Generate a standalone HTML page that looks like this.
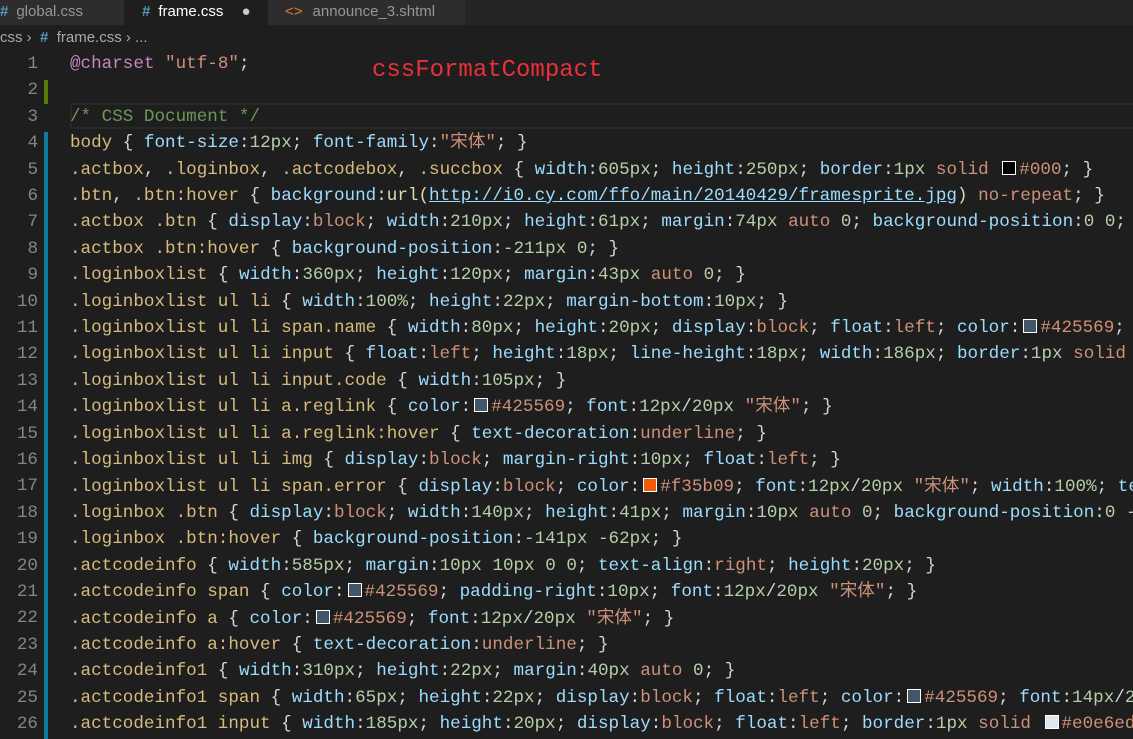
<!DOCTYPE html>
<html><head><meta charset="utf-8"><style>
*{margin:0;padding:0;box-sizing:border-box}
body{width:1133px;height:739px;overflow:hidden;background:#1e1e1e;font-family:"Liberation Sans",sans-serif;position:relative}
.tabs{position:absolute;left:0;top:0;width:1133px;height:25px;background:#252526}
.tab{position:absolute;top:0;height:25px;background:#2d2d2d;color:#969696;font-size:15px;line-height:24px;white-space:nowrap}
.tab .h{color:#519aba;font-weight:bold;margin-right:8px}
.crumb{position:absolute;top:25px;left:0;height:26px;line-height:26px;color:#a9a9a9;font-size:15px;white-space:nowrap}
.ed{position:absolute;left:0;top:51px;width:1133px}
.ln{position:absolute;left:0;width:38px;text-align:right;color:#858585;font-family:"Liberation Mono",monospace;font-size:17.6px;height:26.4px;line-height:26.4px}
.code{position:absolute;left:70px;white-space:pre;font-family:"Liberation Mono","Noto Sans CJK SC",monospace;font-size:17.6px;line-height:26.4px;color:#d4d4d4}
.s{color:#d7ba7d}.p{color:#9cdcfe}.v{color:#ce9178}.n{color:#b5cea8}.a{color:#c586c0}.cm{color:#6a9955}.f{color:#dcdcaa}.u{color:#9cdcfe;text-decoration:underline}
.sw{display:inline-block;width:14px;height:14px;border:1px solid #fff;margin:0 3px 0 3px;vertical-align:-1px}
</style></head><body>
<div class="tabs">
<div class="tab" style="left:0;width:124px;padding-left:0"><span class="h">#</span>global.css</div>
<div class="tab" style="left:124px;width:144px;background:#1e1e1e;color:#fff;padding-left:18px"><span class="h">#</span>frame.css <span style="color:#ccc;margin-left:14px">●</span></div>
<div class="tab" style="left:268px;width:197px;padding-left:17px"><span style="color:#e37933;margin-right:10px">&lt;&gt;</span>announce_3.shtml</div>
</div>
<div class="crumb">css <span style="color:#a9a9a9">›</span>&nbsp; <span style="color:#519aba;font-weight:bold">#</span>&nbsp; frame.css › ...</div>
<div style="position:absolute;left:372px;top:57px;font-family:'Liberation Mono',monospace;font-size:24px;color:#e8313a">cssFormatCompact</div>
<div style="position:absolute;left:70px;top:103px;width:1063px;height:26px;border:2px solid #282828;border-right:none"></div>
<div style="position:absolute;left:44px;top:80px;width:4px;height:24px;background:#587c0c"></div>
<div style="position:absolute;left:44px;top:132px;width:4px;height:607px;background:#0c7d9d"></div>
<div class="ed">
<div class="ln" style="top:0">1</div><div class="ln" style="top:26.4px">2</div><div class="ln" style="top:52.8px">3</div><div class="ln" style="top:79.2px">4</div><div class="ln" style="top:105.6px">5</div><div class="ln" style="top:132px">6</div><div class="ln" style="top:158.4px">7</div><div class="ln" style="top:184.8px">8</div><div class="ln" style="top:211.2px">9</div><div class="ln" style="top:237.6px">10</div><div class="ln" style="top:264px">11</div><div class="ln" style="top:290.4px">12</div><div class="ln" style="top:316.8px">13</div><div class="ln" style="top:343.2px">14</div><div class="ln" style="top:369.6px">15</div><div class="ln" style="top:396px">16</div><div class="ln" style="top:422.4px">17</div><div class="ln" style="top:448.8px">18</div><div class="ln" style="top:475.2px">19</div><div class="ln" style="top:501.6px">20</div><div class="ln" style="top:528px">21</div><div class="ln" style="top:554.4px">22</div><div class="ln" style="top:580.8px">23</div><div class="ln" style="top:607.2px">24</div><div class="ln" style="top:633.6px">25</div><div class="ln" style="top:660px">26</div>
<div class="code"><span class="a">@charset</span> <span class="v">"utf-8"</span>;

<span class="cm">/* CSS Document */</span>
<span class="s">body</span> { <span class="p">font-size</span>:<span class="n">12px</span>; <span class="p">font-family</span>:<span class="v">"宋体"</span>; }
<span class="s">.actbox</span>, <span class="s">.loginbox</span>, <span class="s">.actcodebox</span>, <span class="s">.succbox</span> { <span class="p">width</span>:<span class="n">605px</span>; <span class="p">height</span>:<span class="n">250px</span>; <span class="p">border</span>:<span class="n">1px</span> <span class="v">solid</span> <span class="sw" style="background:#000"></span><span class="v">#000</span>; }
<span class="s">.btn</span>, <span class="s">.btn:hover</span> { <span class="p">background</span>:<span class="f">url(</span><span class="u">http://i0.cy.com/ffo/main/20140429/framesprite.jpg</span><span class="f">)</span> <span class="v">no-repeat</span>; }
<span class="s">.actbox .btn</span> { <span class="p">display</span>:<span class="v">block</span>; <span class="p">width</span>:<span class="n">210px</span>; <span class="p">height</span>:<span class="n">61px</span>; <span class="p">margin</span>:<span class="n">74px</span> <span class="v">auto</span> <span class="n">0</span>; <span class="p">background-position</span>:<span class="n">0</span> <span class="n">0</span>; }
<span class="s">.actbox .btn:hover</span> { <span class="p">background-position</span>:<span class="n">-211px</span> <span class="n">0</span>; }
<span class="s">.loginboxlist</span> { <span class="p">width</span>:<span class="n">360px</span>; <span class="p">height</span>:<span class="n">120px</span>; <span class="p">margin</span>:<span class="n">43px</span> <span class="v">auto</span> <span class="n">0</span>; }
<span class="s">.loginboxlist ul li</span> { <span class="p">width</span>:<span class="n">100%</span>; <span class="p">height</span>:<span class="n">22px</span>; <span class="p">margin-bottom</span>:<span class="n">10px</span>; }
<span class="s">.loginboxlist ul li span.name</span> { <span class="p">width</span>:<span class="n">80px</span>; <span class="p">height</span>:<span class="n">20px</span>; <span class="p">display</span>:<span class="v">block</span>; <span class="p">float</span>:<span class="v">left</span>; <span class="p">color</span>:<span class="sw" style="background:#425569"></span><span class="v">#425569</span>; }
<span class="s">.loginboxlist ul li input</span> { <span class="p">float</span>:<span class="v">left</span>; <span class="p">height</span>:<span class="n">18px</span>; <span class="p">line-height</span>:<span class="n">18px</span>; <span class="p">width</span>:<span class="n">186px</span>; <span class="p">border</span>:<span class="n">1px</span> <span class="v">solid</span> }
<span class="s">.loginboxlist ul li input.code</span> { <span class="p">width</span>:<span class="n">105px</span>; }
<span class="s">.loginboxlist ul li a.reglink</span> { <span class="p">color</span>:<span class="sw" style="background:#425569"></span><span class="v">#425569</span>; <span class="p">font</span>:<span class="n">12px</span>/<span class="n">20px</span> <span class="v">"宋体"</span>; }
<span class="s">.loginboxlist ul li a.reglink:hover</span> { <span class="p">text-decoration</span>:<span class="v">underline</span>; }
<span class="s">.loginboxlist ul li img</span> { <span class="p">display</span>:<span class="v">block</span>; <span class="p">margin-right</span>:<span class="n">10px</span>; <span class="p">float</span>:<span class="v">left</span>; }
<span class="s">.loginboxlist ul li span.error</span> { <span class="p">display</span>:<span class="v">block</span>; <span class="p">color</span>:<span class="sw" style="background:#f35b09"></span><span class="v">#f35b09</span>; <span class="p">font</span>:<span class="n">12px</span>/<span class="n">20px</span> <span class="v">"宋体"</span>; <span class="p">width</span>:<span class="n">100%</span>; <span class="p">text</span>
<span class="s">.loginbox .btn</span> { <span class="p">display</span>:<span class="v">block</span>; <span class="p">width</span>:<span class="n">140px</span>; <span class="p">height</span>:<span class="n">41px</span>; <span class="p">margin</span>:<span class="n">10px</span> <span class="v">auto</span> <span class="n">0</span>; <span class="p">background-position</span>:<span class="n">0</span> <span class="n">-1px</span>
<span class="s">.loginbox .btn:hover</span> { <span class="p">background-position</span>:<span class="n">-141px</span> <span class="n">-62px</span>; }
<span class="s">.actcodeinfo</span> { <span class="p">width</span>:<span class="n">585px</span>; <span class="p">margin</span>:<span class="n">10px</span> <span class="n">10px</span> <span class="n">0</span> <span class="n">0</span>; <span class="p">text-align</span>:<span class="v">right</span>; <span class="p">height</span>:<span class="n">20px</span>; }
<span class="s">.actcodeinfo span</span> { <span class="p">color</span>:<span class="sw" style="background:#425569"></span><span class="v">#425569</span>; <span class="p">padding-right</span>:<span class="n">10px</span>; <span class="p">font</span>:<span class="n">12px</span>/<span class="n">20px</span> <span class="v">"宋体"</span>; }
<span class="s">.actcodeinfo a</span> { <span class="p">color</span>:<span class="sw" style="background:#425569"></span><span class="v">#425569</span>; <span class="p">font</span>:<span class="n">12px</span>/<span class="n">20px</span> <span class="v">"宋体"</span>; }
<span class="s">.actcodeinfo a:hover</span> { <span class="p">text-decoration</span>:<span class="v">underline</span>; }
<span class="s">.actcodeinfo1</span> { <span class="p">width</span>:<span class="n">310px</span>; <span class="p">height</span>:<span class="n">22px</span>; <span class="p">margin</span>:<span class="n">40px</span> <span class="v">auto</span> <span class="n">0</span>; }
<span class="s">.actcodeinfo1 span</span> { <span class="p">width</span>:<span class="n">65px</span>; <span class="p">height</span>:<span class="n">22px</span>; <span class="p">display</span>:<span class="v">block</span>; <span class="p">float</span>:<span class="v">left</span>; <span class="p">color</span>:<span class="sw" style="background:#425569"></span><span class="v">#425569</span>; <span class="p">font</span>:<span class="n">14px</span>/<span class="n">22px</span>
<span class="s">.actcodeinfo1 input</span> { <span class="p">width</span>:<span class="n">185px</span>; <span class="p">height</span>:<span class="n">20px</span>; <span class="p">display</span>:<span class="v">block</span>; <span class="p">float</span>:<span class="v">left</span>; <span class="p">border</span>:<span class="n">1px</span> <span class="v">solid</span> <span class="sw" style="background:#e0e6ed"></span><span class="v">#e0e6ed</span>; }</div>
</div>
</body></html>
